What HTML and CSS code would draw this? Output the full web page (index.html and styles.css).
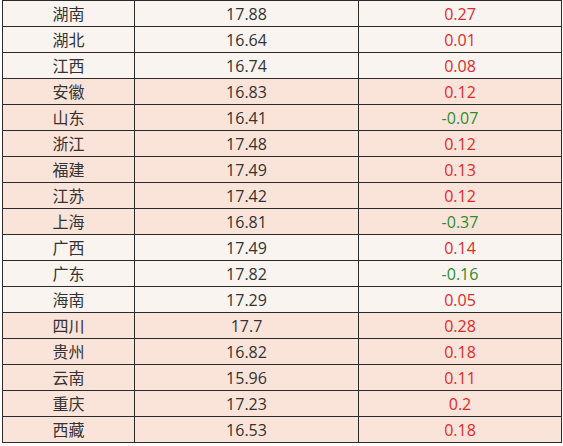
FILE: index.html
```html
<!DOCTYPE html>
<html lang="zh">
<head>
<meta charset="utf-8">
<link rel="stylesheet" href="styles.css">
</head>
<body>
<table class="price-table">
  <colgroup><col class="c1"><col class="c2"><col class="c3"></colgroup>
  <tbody>
    <tr class="light"><td>湖南</td><td>17.88</td><td class="up">0.27</td></tr>
    <tr class="light"><td>湖北</td><td>16.64</td><td class="up">0.01</td></tr>
    <tr class="light"><td>江西</td><td>16.74</td><td class="up">0.08</td></tr>
    <tr class="pink"><td>安徽</td><td>16.83</td><td class="up">0.12</td></tr>
    <tr class="pink"><td>山东</td><td>16.41</td><td class="down">-0.07</td></tr>
    <tr class="pink"><td>浙江</td><td>17.48</td><td class="up">0.12</td></tr>
    <tr class="pink"><td>福建</td><td>17.49</td><td class="up">0.13</td></tr>
    <tr class="pink"><td>江苏</td><td>17.42</td><td class="up">0.12</td></tr>
    <tr class="pink"><td>上海</td><td>16.81</td><td class="down">-0.37</td></tr>
    <tr class="light"><td>广西</td><td>17.49</td><td class="up">0.14</td></tr>
    <tr class="light"><td>广东</td><td>17.82</td><td class="down">-0.16</td></tr>
    <tr class="light"><td>海南</td><td>17.29</td><td class="up">0.05</td></tr>
    <tr class="pink"><td>四川</td><td>17.7</td><td class="up">0.28</td></tr>
    <tr class="pink"><td>贵州</td><td>16.82</td><td class="up">0.18</td></tr>
    <tr class="pink"><td>云南</td><td>15.96</td><td class="up">0.11</td></tr>
    <tr class="pink"><td>重庆</td><td>17.23</td><td class="up">0.2</td></tr>
    <tr class="pink"><td>西藏</td><td>16.53</td><td class="up">0.18</td></tr>
  </tbody>
</table>
</body>
</html>
```
FILE: styles.css
```css
html, body {
  margin: 0;
  padding: 0;
  background: #ffffff;
}
body {
  padding: 0 0 0 2px;
  font-family: "Open Sans", "Noto Sans CJK SC", sans-serif;
  font-size: 16px;
  color: #333333;
}
.price-table {
  border-collapse: collapse;
  table-layout: fixed;
  width: 559px;
}
.c1 { width: 132px; }
.c2 { width: 224px; }
.c3 { width: 203px; }
.price-table td {
  border: 1px solid #2b2b2b;
  height: 25px;
  padding: 1px 0 0 0;
  box-sizing: border-box;
  text-align: center;
  vertical-align: middle;
  line-height: 24px;
}
.light td { background: #f9f4f0; }
.pink td { background: #fae3d8; }
.up { color: #e02a2a; }
.down { color: #2e8b2e; }
```
